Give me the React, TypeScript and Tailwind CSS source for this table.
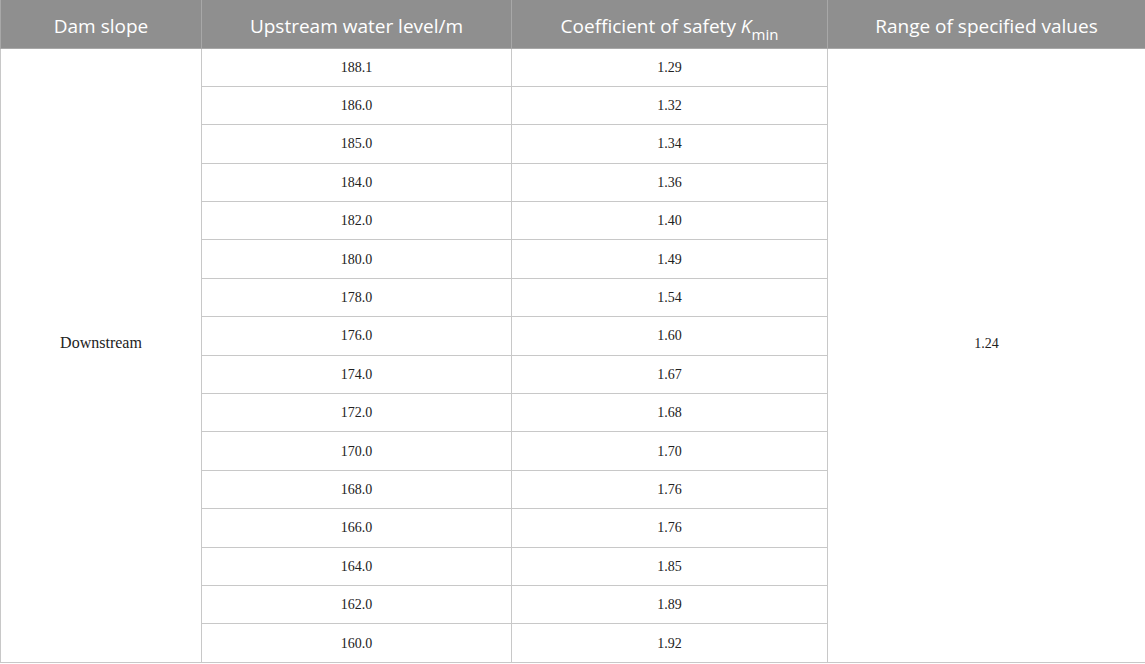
const rows: [string, string][] = [
  ["188.1", "1.29"],
  ["186.0", "1.32"],
  ["185.0", "1.34"],
  ["184.0", "1.36"],
  ["182.0", "1.40"],
  ["180.0", "1.49"],
  ["178.0", "1.54"],
  ["176.0", "1.60"],
  ["174.0", "1.67"],
  ["172.0", "1.68"],
  ["170.0", "1.70"],
  ["168.0", "1.76"],
  ["166.0", "1.76"],
  ["164.0", "1.85"],
  ["162.0", "1.89"],
  ["160.0", "1.92"],
];

export default function App() {
  const cell = "border border-[#c8c8c8] text-center align-middle";
  const head = "border border-[#a8a8a8] border-t-0 font-normal pt-[4px]";
  return (
    <div className="w-[1145px] h-[664px] bg-white overflow-hidden">
      <table className="w-[1145px] border-collapse table-fixed">
        <colgroup>
          <col className="w-[201px]" />
          <col className="w-[310px]" />
          <col className="w-[316px]" />
          <col className="w-[318px]" />
        </colgroup>
        <thead>
          <tr className="h-[48px] bg-[#8f8f8f] text-white text-[19px] font-['Open_Sans',sans-serif]">
            <th className={head}>Dam slope</th>
            <th className={head}>Upstream water level/m</th>
            <th className={head}>
              Coefficient of safety <i>K</i>
              <sub className="text-[15px] align-[-4px]">min</sub>
            </th>
            <th className={head}>Range of specified values</th>
          </tr>
        </thead>
        <tbody className="text-[14px] text-[#222] font-['Liberation_Serif',serif]">
          {rows.map(([level, k], i) => (
            <tr key={level} className="h-[38.4px]">
              {i === 0 && (
                <td rowSpan={rows.length} className={`${cell} pb-[24px] text-[16px]`}>
                  Downstream
                </td>
              )}
              <td className={cell}>{level}</td>
              <td className={cell}>{k}</td>
              {i === 0 && (
                <td rowSpan={rows.length} className={`${cell} pb-[24px]`}>
                  1.24
                </td>
              )}
            </tr>
          ))}
        </tbody>
      </table>
    </div>
  );
}
